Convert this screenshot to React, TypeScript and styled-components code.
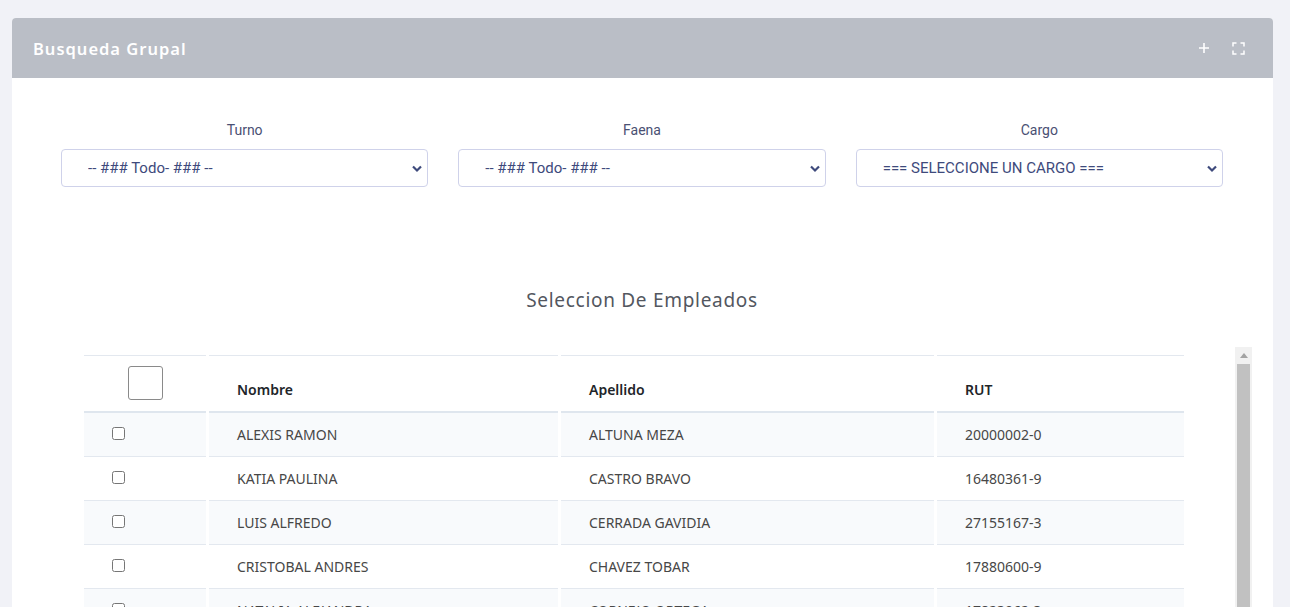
import React from "react";
import styled, { createGlobalStyle } from "styled-components";

const GlobalStyle = createGlobalStyle`
  html, body { margin: 0; padding: 0; background: #f1f2f7; }
  body { font-family: "Roboto", "Noto Sans", sans-serif; }
  * { box-sizing: border-box; }
`;

const Page = styled.div`
  padding: 18px 17px 0 12px;
  height: 607px;
  overflow: hidden;
`;

const Card = styled.section`
  background: #ffffff;
  border-radius: 4px 4px 0 0;
  min-height: 700px;
`;

const CardHeader = styled.header`
  height: 60px;
  background: #babec6;
  border-radius: 4px 4px 0 0;
  display: flex;
  align-items: center;
  justify-content: space-between;
  padding: 0 28px 0 21px;
`;

const CardTitle = styled.h2`
  margin: 0;
  color: #ffffff;
  font-family: "Noto Sans", sans-serif;
  font-weight: 600;
  font-size: 16.5px;
  letter-spacing: 1px;
`;

const Tools = styled.div`
  display: flex;
  align-items: center;
  gap: 20px;
`;

const ToolButton = styled.button`
  border: 0;
  background: transparent;
  padding: 0;
  width: 14px;
  height: 14px;
  display: flex;
  align-items: center;
  justify-content: center;
  cursor: pointer;
`;

const CardBody = styled.div`
  padding: 42px 35px 0 34px;
`;

const FilterRow = styled.div`
  display: grid;
  grid-template-columns: repeat(3, 1fr);
`;

const Field = styled.div`
  padding: 0 15px;
  display: flex;
  flex-direction: column;
  align-items: stretch;
`;

const Label = styled.label`
  text-align: center;
  font-size: 14px;
  line-height: 20px;
  color: #4a5073;
  margin-bottom: 9px;
`;

const SelectWrap = styled.div`
  position: relative;
`;

const Select = styled.select`
  appearance: none;
  -webkit-appearance: none;
  width: 100%;
  height: 38px;
  border: 1px solid #cfd2ea;
  border-radius: 4px;
  background: #fff;
  padding: 0 30px 0 26px;
  font-family: "Roboto", sans-serif;
  font-size: 15px;
  color: #3e4a7c;
  outline: none;
`;

const Chevron = styled.svg`
  position: absolute;
  right: 4px;
  top: 50%;
  transform: translateY(-50%);
  pointer-events: none;
`;

const SectionTitle = styled.h3`
  margin: 100px 0 0;
  text-align: center;
  font-family: "Noto Sans", sans-serif;
  font-weight: 400;
  font-size: 19px;
  letter-spacing: 0.7px;
  color: #53575f;
  line-height: 26px;
`;

const TableArea = styled.div`
  margin: 34px -14px 0 35px;
  height: 400px;
  display: flex;
  justify-content: space-between;
  align-items: flex-start;
`;

const TableViewport = styled.div`
  height: 400px;
  overflow: hidden;
  padding-top: 8px;
`;

const ScrollTrack = styled.div`
  width: 17px;
  height: 400px;
  background: #f1f1f1;
  display: flex;
  flex-direction: column;
  align-items: center;
`;

const ScrollArrow = styled.div`
  height: 17px;
  width: 100%;
  display: flex;
  align-items: center;
  justify-content: center;
`;

const ScrollThumb = styled.div`
  width: 13px;
  height: 300px;
  background: #c1c1c1;
`;

const Table = styled.table`
  width: 1106px;
  border-collapse: separate;
  border-spacing: 3px 0;
  font-family: "Noto Sans", sans-serif;
`;

const HeadCell = styled.th<{ $center?: boolean; $w: number }>`
  width: ${(p) => p.$w}px;
  text-align: ${(p) => (p.$center ? "center" : "left")};
  vertical-align: ${(p) => (p.$center ? "top" : "bottom")};
  padding: ${(p) => (p.$center ? "10px 0 0" : "0 28px 11px")};
  height: 58px;
  border-top: 1px solid #e3e8ef;
  border-bottom: 2px solid #dfe6ee;
  font-size: 14px;
  font-weight: 600;
  color: #212529;
  line-height: 20px;
`;

const BigCheck = styled.span`
  display: inline-block;
  width: 35px;
  height: 34px;
  border: 1px solid #8a8a8a;
  border-radius: 3px;
  background: #fff;
`;

const Row = styled.tr<{ $striped: boolean }>`
  background: ${(p) => (p.$striped ? "#f8fafc" : "#ffffff")};
`;

const Cell = styled.td`
  height: 44px;
  padding: 0 28px;
  border-bottom: 1px solid #e3e8ef;
  font-size: 14px;
  color: #474747;
  vertical-align: middle;
  line-height: 20px;
`;

const CheckCell = styled.td`
  height: 44px;
  padding: 14px 28px 0;
  border-bottom: 1px solid #e3e8ef;
  vertical-align: top;
`;

const RowCheck = styled.input`
  margin: 0;
  width: 13px;
  height: 13px;
  display: block;
`;

const employees = [
  ["ALEXIS RAMON", "ALTUNA MEZA", "20000002-0"],
  ["KATIA PAULINA", "CASTRO BRAVO", "16480361-9"],
  ["LUIS ALFREDO", "CERRADA GAVIDIA", "27155167-3"],
  ["CRISTOBAL ANDRES", "CHAVEZ TOBAR", "17880600-9"],
  ["NATALIA ALEJANDRA", "CORNEJO ORTEGA", "17823962-3"],
  ["MARIA JOSE", "DIAZ FUENTES", "18234567-1"],
  ["JUAN PABLO", "ESPINOZA ROJAS", "15987654-2"],
  ["CAROLINA ANDREA", "FLORES MUÑOZ", "19345678-5"],
];

const fields = [
  { label: "Turno", value: "-- ### Todo- ### --" },
  { label: "Faena", value: "-- ### Todo- ### --" },
  { label: "Cargo", value: "=== SELECCIONE UN CARGO ===" },
];

export default function App() {
  return (
    <>
      <GlobalStyle />
      <Page>
        <Card>
          <CardHeader>
            <CardTitle>Busqueda Grupal</CardTitle>
            <Tools>
              <ToolButton aria-label="Agregar">
                <svg width="12" height="12" viewBox="0 0 12 12">
                  <path d="M6 1v10M1 6h10" stroke="#fff" strokeWidth="1.6" />
                </svg>
              </ToolButton>
              <ToolButton aria-label="Expandir">
                <svg width="13" height="13" viewBox="0 0 13 13" fill="none">
                  <path
                    d="M1 4.5V1h3.5M8.5 1H12v3.5M12 8.5V12H8.5M4.5 12H1V8.5"
                    stroke="#fff"
                    strokeWidth="1.5"
                  />
                </svg>
              </ToolButton>
            </Tools>
          </CardHeader>
          <CardBody>
            <FilterRow>
              {fields.map((f) => (
                <Field key={f.label}>
                  <Label>{f.label}</Label>
                  <SelectWrap>
                    <Select defaultValue={f.value}>
                      <option>{f.value}</option>
                    </Select>
                    <Chevron width="14" height="14" viewBox="0 0 14 14">
                      <path
                        d="M3 5.5L7 9.5l4-4"
                        stroke="#3e4a7c"
                        strokeWidth="2.2"
                        fill="none"
                      />
                    </Chevron>
                  </SelectWrap>
                </Field>
              ))}
            </FilterRow>
            <SectionTitle>Seleccion De Empleados</SectionTitle>
            <TableArea>
              <TableViewport>
                <Table>
                  <thead>
                    <tr>
                      <HeadCell $center $w={122}>
                        <BigCheck />
                      </HeadCell>
                      <HeadCell $w={349}>Nombre</HeadCell>
                      <HeadCell $w={373}>Apellido</HeadCell>
                      <HeadCell $w={247}>RUT</HeadCell>
                    </tr>
                  </thead>
                  <tbody>
                    {employees.map((e, i) => (
                      <Row key={e[2]} $striped={i % 2 === 0}>
                        <CheckCell>
                          <RowCheck type="checkbox" />
                        </CheckCell>
                        <Cell>{e[0]}</Cell>
                        <Cell>{e[1]}</Cell>
                        <Cell>{e[2]}</Cell>
                      </Row>
                    ))}
                  </tbody>
                </Table>
              </TableViewport>
              <ScrollTrack aria-hidden="true">
                <ScrollArrow>
                  <svg width="8" height="5" viewBox="0 0 8 5">
                    <path d="M0 5h8L4 0z" fill="#a3a3a3" />
                  </svg>
                </ScrollArrow>
                <ScrollThumb />
              </ScrollTrack>
            </TableArea>
          </CardBody>
        </Card>
      </Page>
    </>
  );
}
